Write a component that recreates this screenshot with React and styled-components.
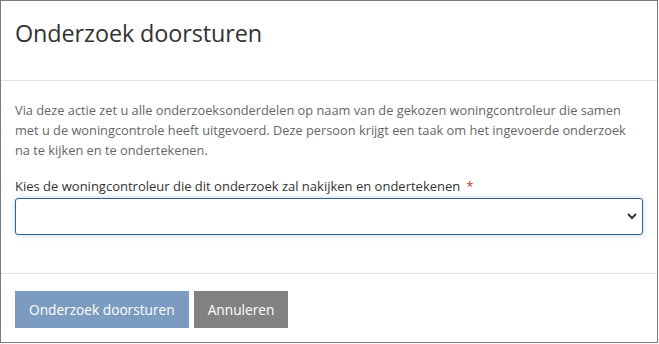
import React from "react";
import styled, { createGlobalStyle } from "styled-components";

const Global = createGlobalStyle`
  html, body { margin: 0; padding: 0; background: #fff; }
  body { font-family: "Open Sans", "Noto Sans", sans-serif; }
  * { box-sizing: border-box; }
`;

const Modal = styled.div`
  width: 658px;
  height: 343px;
  border: 1px solid #7a7a7a;
  background: #fff;
  display: flex;
  flex-direction: column;
`;

const Header = styled.header`
  height: 80px;
  padding: 17px 14px 0;
  border-bottom: 1px solid #e2e2e2;
`;

const Title = styled.h1`
  margin: 0;
  font-size: 23.4px;
  font-weight: 400;
  color: #333;
  line-height: 30px;
  letter-spacing: -0.1px;
`;

const Body = styled.div`
  flex: 1;
  padding: 19px 14px 0;
  border-bottom: 1px solid #e2e2e2;
`;

const Intro = styled.p`
  margin: 0;
  font-size: 12.8px;
  line-height: 20px;
  color: #666;
`;

const Label = styled.label`
  display: block;
  margin-top: 16px;
  font-size: 13px;
  line-height: 20px;
  color: #333;
  font-weight: 500;
`;

const Required = styled.span`
  color: #c0392b;
  margin-left: 6px;
`;

const SelectWrap = styled.div`
  position: relative;
  margin-top: 2px;
  width: 628px;
`;

const Select = styled.select`
  appearance: none;
  width: 100%;
  height: 37px;
  border: 1px solid #2f5e93;
  border-radius: 3px;
  background: #fff;
  box-shadow: 0 0 6px rgba(47, 94, 147, 0.25);
  font-family: inherit;
  font-size: 14px;
  padding: 0 30px 0 10px;
  outline: none;
`;

const Chevron = styled.svg`
  position: absolute;
  right: 5px;
  top: 14px;
  pointer-events: none;
`;

const Footer = styled.footer`
  height: 68px;
  padding: 17px 14px 0;
  display: flex;
  gap: 5px;
  align-items: flex-start;
`;

const Button = styled.button`
  height: 37px;
  border: none;
  border-radius: 0;
  padding: 0 ${(p) => p.$px}px;
  background: ${(p) => p.$bg};
  color: #fff;
  font-family: inherit;
  font-size: 13.7px;
  cursor: pointer;
`;

export default function App() {
  return (
    <>
      <Global />
      <Modal>
        <Header>
          <Title>Onderzoek doorsturen</Title>
        </Header>
        <Body>
          <Intro>
            Via deze actie zet u alle onderzoeksonderdelen op naam van de gekozen woningcontroleur die samen
            met u de woningcontrole heeft uitgevoerd. Deze persoon krijgt een taak om het ingevoerde onderzoek
            na te kijken en te ondertekenen.
          </Intro>
          <Label htmlFor="controleur">
            Kies de woningcontroleur die dit onderzoek zal nakijken en ondertekenen
            <Required>*</Required>
          </Label>
          <SelectWrap>
            <Select id="controleur" defaultValue="">
              <option value=""></option>
            </Select>
            <Chevron width="12" height="8" viewBox="0 0 12 8">
              <path d="M2 2l4 4 4-4" fill="none" stroke="#333" strokeWidth="2" />
            </Chevron>
          </SelectWrap>
        </Body>
        <Footer>
          <Button $bg="#7b9bc0" $px={14}>Onderzoek doorsturen</Button>
          <Button $bg="#828282" $px={14}>Annuleren</Button>
        </Footer>
      </Modal>
    </>
  );
}
